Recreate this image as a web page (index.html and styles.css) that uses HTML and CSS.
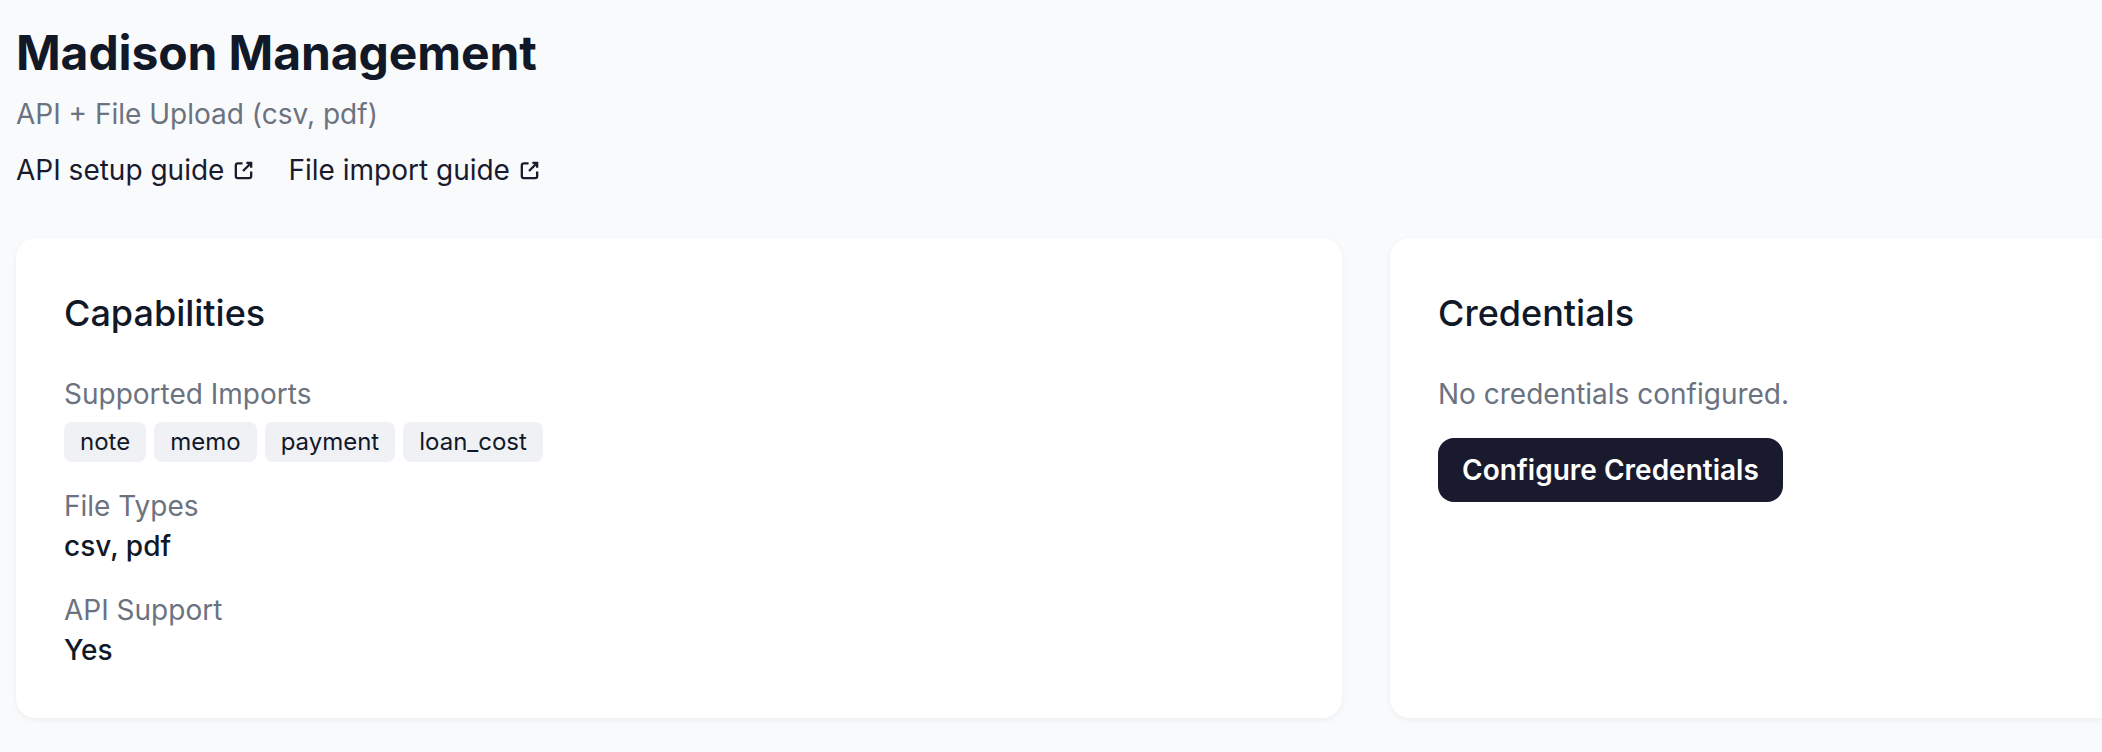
FILE: index.html
```html
<!DOCTYPE html>
<html lang="en">
<head>
    <meta charset="UTF-8">
    <title>Madison Management</title>
    <link rel="stylesheet" href="styles.css">
</head>
<body>
    <header class="header">
        <h1 class="title">Madison Management</h1>
        <p class="subtitle">API + File Upload (csv, pdf)</p>
        <div class="links">
            <a class="link" href="#">API setup guide
                <svg class="link-icon" viewBox="0 0 24 24" fill="none" stroke="currentColor" stroke-width="2.4"><path d="M11 4.5H6A2 2 0 0 0 4 6.5V18a2 2 0 0 0 2 2h12a2 2 0 0 0 2-2v-5"/><path d="M11.5 12.5 19.5 4.5"/><path d="M15 4h5v5"/></svg>
            </a>
            <a class="link" href="#">File import guide
                <svg class="link-icon" viewBox="0 0 24 24" fill="none" stroke="currentColor" stroke-width="2.4"><path d="M11 4.5H6A2 2 0 0 0 4 6.5V18a2 2 0 0 0 2 2h12a2 2 0 0 0 2-2v-5"/><path d="M11.5 12.5 19.5 4.5"/><path d="M15 4h5v5"/></svg>
            </a>
        </div>
    </header>
    <main class="cards">
        <section class="card">
            <h2 class="card-title">Capabilities</h2>
            <div class="field">
                <div class="label">Supported Imports</div>
                <div class="chips">
                    <span class="chip">note</span>
                    <span class="chip">memo</span>
                    <span class="chip">payment</span>
                    <span class="chip">loan_cost</span>
                </div>
            </div>
            <div class="field">
                <div class="label">File Types</div>
                <div class="value">csv, pdf</div>
            </div>
            <div class="field">
                <div class="label">API Support</div>
                <div class="value">Yes</div>
            </div>
        </section>
        <section class="card">
            <h2 class="card-title">Credentials</h2>
            <p class="empty">No credentials configured.</p>
            <button class="button">Configure Credentials</button>
        </section>
    </main>
</body>
</html>
```

FILE: styles.css
```css
html, body {
    height: 100%;
    overflow: hidden;
}
body {
    margin: 0;
    padding: 16px;
    box-sizing: border-box;
    font-family: Inter, "Liberation Sans", sans-serif;
    background-color: #f9fafb;
    color: #111827;
}
.title {
    margin: 0;
    font-size: 48px;
    line-height: 74px;
    font-weight: 700;
    letter-spacing: -0.1px;
}
.subtitle {
    margin: 4px 0 0;
    font-size: 28px;
    line-height: 40px;
    color: #6b7280;
}
.links {
    display: flex;
    gap: 33px;
    margin-top: 16px;
}
.link {
    display: flex;
    align-items: center;
    gap: 8px;
    font-size: 28px;
    line-height: 40px;
    color: #1a1a2e;
    text-decoration: none;
}
.link-icon {
    width: 23px;
    height: 23px;
}
.cards {
    display: grid;
    grid-template-columns: 1326px 1326px;
    gap: 48px;
    margin-top: 48px;
}
.card {
    height: 480px;
    box-sizing: border-box;
    padding: 48px;
    background-color: #fff;
    border-radius: 20px;
    box-shadow: 0 2px 6px rgba(0, 0, 0, 0.05);
}
.card-title {
    margin: 0 0 34px;
    font-size: 36px;
    line-height: 54px;
    font-weight: 500;
}
.field {
    margin-bottom: 24px;
}
.label,
.empty {
    font-size: 28px;
    line-height: 40px;
    color: #6b7280;
}
.chips {
    display: flex;
    gap: 8px;
    margin-top: 8px;
}
.chip {
    padding: 0 16px;
    font-size: 24px;
    line-height: 40px;
    background-color: #f0f1f5;
    border-radius: 8px;
}
.value {
    font-size: 28px;
    line-height: 40px;
    font-weight: 500;
}
.empty {
    margin: 0 0 24px;
}
.button {
    padding: 0 24px;
    height: 64px;
    font-family: inherit;
    font-size: 28px;
    font-weight: 600;
    color: #fff;
    background-color: #1a1a2e;
    border: none;
    border-radius: 16px;
}
```
